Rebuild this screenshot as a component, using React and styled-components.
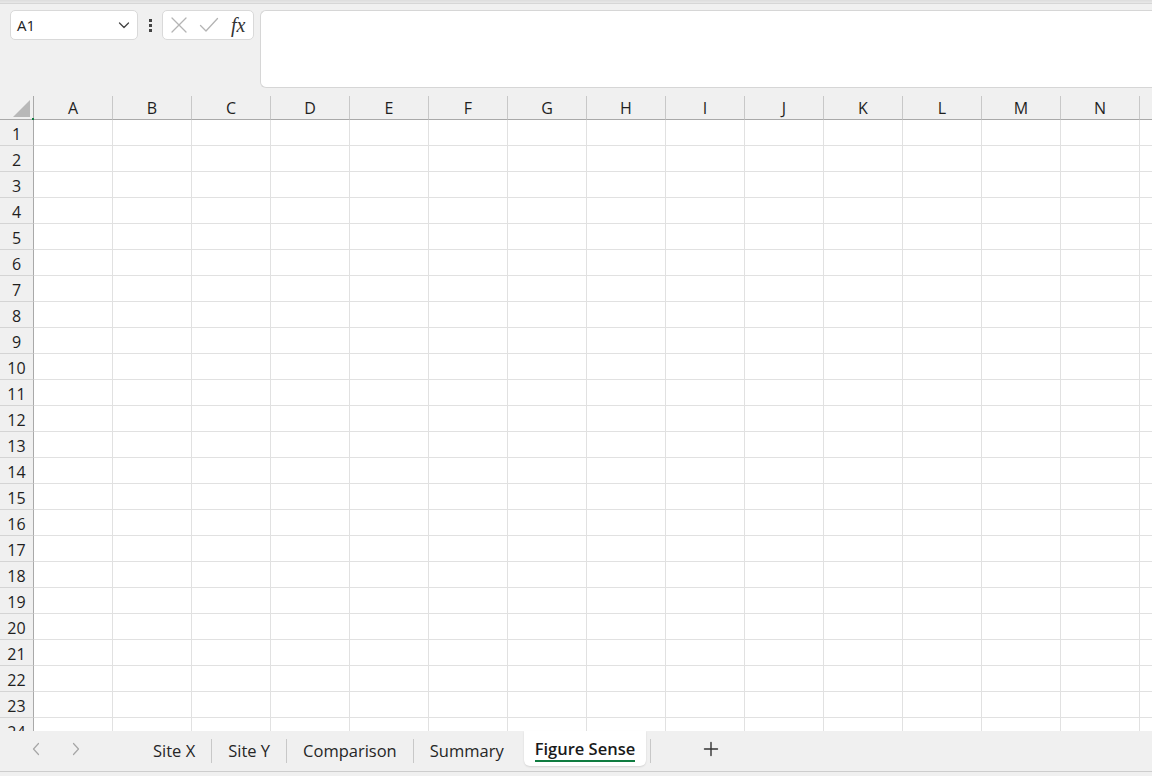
import React from 'react';
import styled, { createGlobalStyle } from 'styled-components';

const GlobalStyle = createGlobalStyle`
  html, body {
    margin: 0;
    padding: 0;
    background: #f0f0f0;
  }
  body {
    font-family: "Open Sans", "Noto Sans", sans-serif;
    color: #1f1f1f;
  }
`;

const COLUMNS = ['A', 'B', 'C', 'D', 'E', 'F', 'G', 'H', 'I', 'J', 'K', 'L', 'M', 'N', 'O'];
const ROWS = Array.from({ length: 24 }, (_, i) => i + 1);
const SHEETS = ['Site X', 'Site Y', 'Comparison', 'Summary', 'Figure Sense'];
const ACTIVE_SHEET = 'Figure Sense';

const Page = styled.div`
  width: 1152px;
  height: 776px;
  display: flex;
  flex-direction: column;
  overflow: hidden;
  background: #f0f0f0;
`;

const TopEdge = styled.div`
  height: 3px;
  background: linear-gradient(#dcdcdc, #e8e8e8);
  border-bottom: 1px solid #d6d6d6;
  flex-shrink: 0;
`;

const FormulaBar = styled.div`
  height: 92px;
  display: flex;
  align-items: flex-start;
  padding: 6px 0 0 10px;
  box-sizing: border-box;
  flex-shrink: 0;
`;

const NameBox = styled.div`
  width: 128px;
  height: 30px;
  box-sizing: border-box;
  background: #fff;
  border: 1px solid #d9d9d9;
  border-radius: 5px;
  display: flex;
  align-items: center;
  justify-content: space-between;
  padding: 0 6px 0 6px;
  font-size: 15px;
  color: #222;
`;

const Dots = styled.div`
  width: 24px;
  height: 30px;
  display: flex;
  flex-direction: column;
  align-items: center;
  justify-content: center;
  gap: 2px;

  span {
    width: 3px;
    height: 3px;
    background: #444;
  }
`;

const FxButtons = styled.div`
  width: 92px;
  height: 30px;
  box-sizing: border-box;
  background: #fff;
  border: 1px solid #d9d9d9;
  border-radius: 5px;
  display: flex;
  align-items: center;
  padding: 0 4px 0 7px;
  gap: 11px;
`;

const FxLabel = styled.span`
  font-family: "Liberation Serif", "DejaVu Serif", serif;
  font-style: italic;
  font-size: 20px;
  color: #333;
  margin-left: 1px;
  line-height: 1;
`;

const FormulaInput = styled.div`
  flex: 1;
  height: 78px;
  margin-left: 6px;
  box-sizing: border-box;
  background: #fff;
  border: 1px solid #d6d6d6;
  border-right: none;
  border-radius: 6px 0 0 6px;
`;

const Sheet = styled.div`
  flex: 1;
  overflow: hidden;
  background: #fff;
  position: relative;
`;

const GridRow = styled.div`
  display: grid;
  grid-template-columns: 34px repeat(${COLUMNS.length}, 79px);
  height: ${({ $header }) => ($header ? '24px' : '26px')};
`;

const Corner = styled.div`
  background: #f0f0f0;
  border-right: 1px solid #a9a9a9;
  border-bottom: 1px solid #a9a9a9;
  display: flex;
  align-items: flex-end;
  justify-content: flex-end;
  padding: 0 3px 2px 0;
  position: relative;
`;

const SelectionDot = styled.span`
  position: absolute;
  right: -1px;
  bottom: -1px;
  width: 2px;
  height: 2px;
  background: #107c41;
`;

const ColHeader = styled.div`
  background: #f0f0f0;
  border-right: 1px solid #c8c8c8;
  border-bottom: 1px solid #a9a9a9;
  display: flex;
  align-items: center;
  justify-content: center;
  font-size: 16px;
  color: #1f1f1f;
  padding-top: 1px;
  overflow: hidden;
`;

const RowHeader = styled.div`
  background: #f0f0f0;
  border-right: 1px solid #a9a9a9;
  border-bottom: 1px solid #d4d4d4;
  display: flex;
  align-items: center;
  justify-content: center;
  font-size: 16px;
  color: #1f1f1f;
  padding-top: 2px;
  box-sizing: border-box;
`;

const Cell = styled.div`
  border-right: 1px solid #e1e1e1;
  border-bottom: 1px solid #e1e1e1;
  background: #fff;
`;

const TabBar = styled.div`
  height: 40px;
  flex-shrink: 0;
  display: flex;
  align-items: flex-start;
  background: #f0f0f0;
  border-bottom: 1px solid #cdcdcd;
`;

const Footer = styled.div`
  height: 4px;
  flex-shrink: 0;
  background: #f0f0f0;
`;

const NavArrows = styled.div`
  width: 137px;
  height: 36px;
  display: flex;
  align-items: center;
  padding-left: 31px;
  gap: 30px;
  box-sizing: border-box;
`;

const Tab = styled.div`
  height: 35px;
  display: flex;
  align-items: center;
  padding: 4px 16px 0;
  box-sizing: border-box;
  font-size: 16.5px;
  color: #262626;
  white-space: nowrap;
  position: relative;

  ${({ $active }) =>
    $active &&
    `
    background: #fff;
    border-radius: 0 0 6px 6px;
    font-weight: 600;
    color: #1a1a1a;
    padding: 0 11px;
    margin: 0 4px;
    box-shadow: 0 1px 2px rgba(0, 0, 0, 0.12);
  `}
`;

const Underline = styled.span`
  position: absolute;
  left: 11px;
  right: 11px;
  bottom: 4px;
  height: 2px;
  background: #107c41;
`;

const Separator = styled.div`
  width: 1px;
  height: 24px;
  margin-top: 8px;
  background: #c8c8c8;
`;

const AddSheet = styled.div`
  width: 120px;
  height: 36px;
  display: flex;
  align-items: center;
  justify-content: center;
`;

const Chevron = () => (
  <svg width="14" height="14" viewBox="0 0 14 14" fill="none">
    <path d="M2.5 5l4.5 4.5L11.5 5" stroke="#444" strokeWidth="1.3" strokeLinecap="round" strokeLinejoin="round" />
  </svg>
);

const CrossIcon = () => (
  <svg width="18" height="18" viewBox="0 0 18 18" fill="none">
    <path d="M2 2l14 14M16 2L2 16" stroke="#b4b4b4" strokeWidth="1.3" strokeLinecap="round" />
  </svg>
);

const CheckIcon = () => (
  <svg width="20" height="18" viewBox="0 0 20 18" fill="none">
    <path d="M1.5 9.5l5.5 5.5L18.5 2.5" stroke="#b4b4b4" strokeWidth="1.3" strokeLinecap="round" strokeLinejoin="round" />
  </svg>
);

const ArrowIcon = ({ dir }) => (
  <svg width="10" height="14" viewBox="0 0 10 14" fill="none">
    <path
      d={dir === 'left' ? 'M7.5 1.5L2.5 7l5 5.5' : 'M2.5 1.5L7.5 7l-5 5.5'}
      stroke="#a6a6a6"
      strokeWidth="1.2"
      strokeLinecap="round"
      strokeLinejoin="round"
    />
  </svg>
);

const PlusIcon = () => (
  <svg width="16" height="16" viewBox="0 0 16 16" fill="none">
    <path d="M8 1.5v13M1.5 8h13" stroke="#333" strokeWidth="1.4" strokeLinecap="round" />
  </svg>
);

const CornerTriangle = () => (
  <svg width="17" height="17" viewBox="0 0 17 17">
    <polygon points="17,0 17,17 0,17" fill="#b8b8b8" />
  </svg>
);

const App = () => {
  return (
    <>
      <GlobalStyle />
      <Page>
        <TopEdge />
        <FormulaBar>
          <NameBox>
            <span>A1</span>
            <Chevron />
          </NameBox>
          <Dots>
            <span />
            <span />
            <span />
          </Dots>
          <FxButtons>
            <CrossIcon />
            <CheckIcon />
            <FxLabel>fx</FxLabel>
          </FxButtons>
          <FormulaInput />
        </FormulaBar>

        <Sheet>
          <GridRow $header>
            <Corner>
              <CornerTriangle />
              <SelectionDot />
            </Corner>
            {COLUMNS.map((col) => (
              <ColHeader key={col}>{col}</ColHeader>
            ))}
          </GridRow>
          {ROWS.map((row) => (
            <GridRow key={row}>
              <RowHeader>{row}</RowHeader>
              {COLUMNS.map((col) => (
                <Cell key={col} />
              ))}
            </GridRow>
          ))}
        </Sheet>

        <TabBar>
          <NavArrows>
            <ArrowIcon dir="left" />
            <ArrowIcon dir="right" />
          </NavArrows>
          {SHEETS.map((name, i) => (
            <React.Fragment key={name}>
              {i > 0 && name !== ACTIVE_SHEET && <Separator />}
              <Tab $active={name === ACTIVE_SHEET}>
                {name}
                {name === ACTIVE_SHEET && <Underline />}
              </Tab>
            </React.Fragment>
          ))}
          <Separator />
          <AddSheet>
            <PlusIcon />
          </AddSheet>
        </TabBar>
        <Footer />
      </Page>
    </>
  );
};

export default App;
